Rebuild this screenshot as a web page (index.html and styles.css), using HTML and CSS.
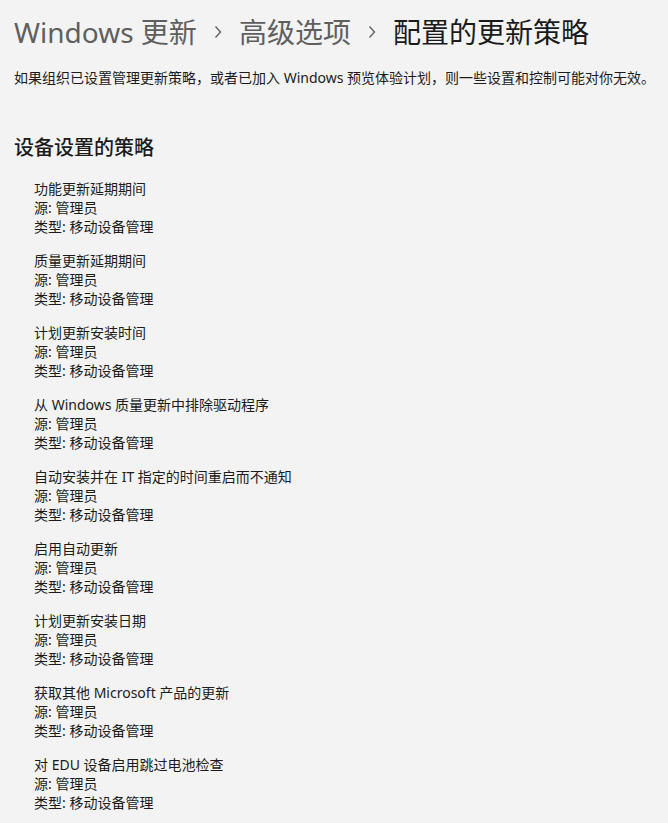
FILE: index.html
```html
<!DOCTYPE html>
<html lang="zh-CN">
<head>
<meta charset="utf-8">
<link rel="stylesheet" href="styles.css">
</head>
<body>
<div class="page">
  <h1 class="crumbs">
    <span class="crumb">Windows 更新</span>
    <svg class="chev" viewBox="0 0 8 14" width="8" height="14"><path d="M1.5 1.5 L6.5 7 L1.5 12.5" fill="none" stroke="#5c5c5c" stroke-width="1.3"/></svg>
    <span class="crumb">高级选项</span>
    <svg class="chev" viewBox="0 0 8 14" width="8" height="14"><path d="M1.5 1.5 L6.5 7 L1.5 12.5" fill="none" stroke="#5c5c5c" stroke-width="1.3"/></svg>
    <span class="crumb current">配置的更新策略</span>
  </h1>
  <p class="desc">如果组织已设置管理更新策略，或者已加入 Windows 预览体验计划，则一些设置和控制可能对你无效。</p>
  <h2 class="section">设备设置的策略</h2>
  <ul class="policies">
    <li class="policy"><div>功能更新延期期间</div><div>源: 管理员</div><div>类型: 移动设备管理</div></li>
    <li class="policy"><div>质量更新延期期间</div><div>源: 管理员</div><div>类型: 移动设备管理</div></li>
    <li class="policy"><div>计划更新安装时间</div><div>源: 管理员</div><div>类型: 移动设备管理</div></li>
    <li class="policy"><div>从 Windows 质量更新中排除驱动程序</div><div>源: 管理员</div><div>类型: 移动设备管理</div></li>
    <li class="policy"><div>自动安装并在 IT 指定的时间重启而不通知</div><div>源: 管理员</div><div>类型: 移动设备管理</div></li>
    <li class="policy"><div>启用自动更新</div><div>源: 管理员</div><div>类型: 移动设备管理</div></li>
    <li class="policy"><div>计划更新安装日期</div><div>源: 管理员</div><div>类型: 移动设备管理</div></li>
    <li class="policy"><div>获取其他 Microsoft 产品的更新</div><div>源: 管理员</div><div>类型: 移动设备管理</div></li>
    <li class="policy"><div>对 EDU 设备启用跳过电池检查</div><div>源: 管理员</div><div>类型: 移动设备管理</div></li>
  </ul>
</div>
</body>
</html>
```
FILE: styles.css
```css
html, body {
  margin: 0;
  padding: 0;
  background: #f3f3f3;
}
body {
  font-family: "Segoe UI", "Noto Sans", "Noto Sans CJK SC", sans-serif;
  color: #1b1b1b;
}
.page {
  padding: 13px 14px 0 14px;
}
.crumbs {
  margin: 0;
  display: flex;
  align-items: center;
  gap: 17px;
  font-size: 28px;
  font-weight: 400;
  line-height: 38px;
  height: 38px;
}
.crumb {
  color: #5f5f5f;
  white-space: nowrap;
}
.crumb.current {
  color: #1b1b1b;
}
.chev {
  flex: none;
}
.desc {
  margin: 17px 0 0 0;
  font-size: 14px;
  line-height: 20px;
  white-space: nowrap;
}
.section {
  margin: 46px 0 0 0;
  font-size: 20px;
  font-weight: 500;
  line-height: 28px;
}
.policies {
  list-style: none;
  margin: 17px 0 0 20px;
  padding: 0;
  display: flex;
  flex-direction: column;
  gap: 15px;
}
.policy {
  font-size: 14px;
  line-height: 19px;
}
```
